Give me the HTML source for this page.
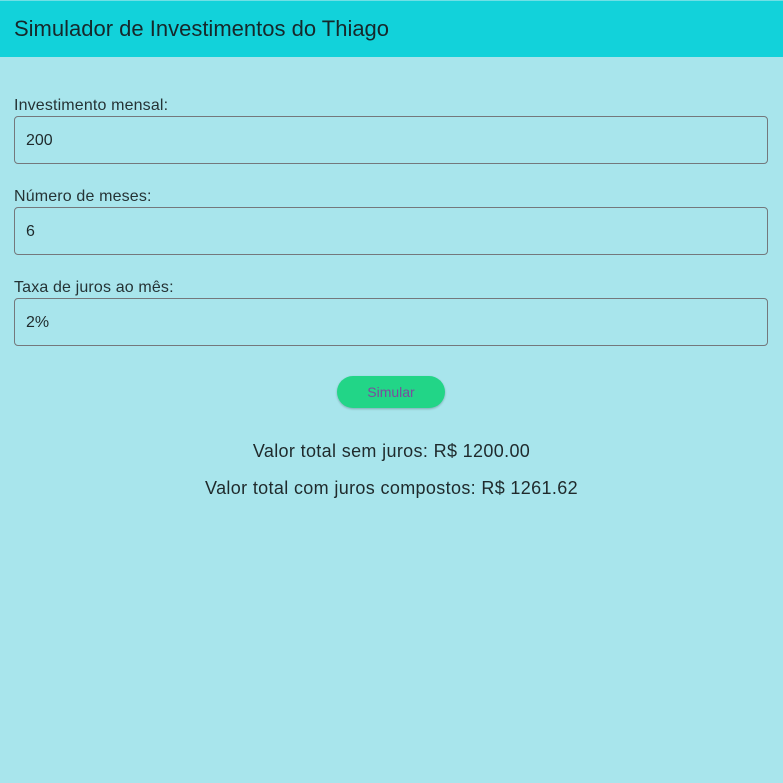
<!DOCTYPE html>
<html><head><style>
body{margin:0;width:783px;height:783px;background:#a8e5ec;font-family:"Liberation Sans",sans-serif;color:#1f2a2c;position:relative;overflow:hidden}
.h{position:absolute;left:0;top:0;width:783px;height:57px;background:#12d2da;border-top:1px solid #6fe0e6;box-sizing:border-box}
.h span{position:absolute;left:14px;top:15px;font-size:22px;color:#16282b}
.l{position:absolute;left:14px;font-size:16px;color:#253335;letter-spacing:0.15px}
.i{position:absolute;left:14px;width:754px;height:48px;box-sizing:border-box;border:1px solid #74787c;border-radius:4px}
.i span{position:absolute;left:11px;top:15px;font-size:16px}
.b{position:absolute;left:337px;top:376px;width:108px;height:32px;border-radius:16px;background:#22d587;box-shadow:0 1px 2px rgba(0,0,0,.25);text-align:center;line-height:32px;font-size:14px;color:#7b4d9e}
.r{position:absolute;left:0;width:783px;text-align:center;font-size:18px;color:#1f2a2c;letter-spacing:0.35px}
</style></head><body>
<div class="h"><span>Simulador de Investimentos do Thiago</span></div>
<div class="l" style="top:97px">Investimento mensal:</div>
<div class="i" style="top:116px"><span>200</span></div>
<div class="l" style="top:188px">Número de meses:</div>
<div class="i" style="top:207px"><span>6</span></div>
<div class="l" style="top:279px">Taxa de juros ao mês:</div>
<div class="i" style="top:298px"><span>2%</span></div>
<div class="b">Simular</div>
<div class="r" style="top:441px">Valor total sem juros: R$ 1200.00</div>
<div class="r" style="top:478px">Valor total com juros compostos: R$ 1261.62</div>
</body></html>
